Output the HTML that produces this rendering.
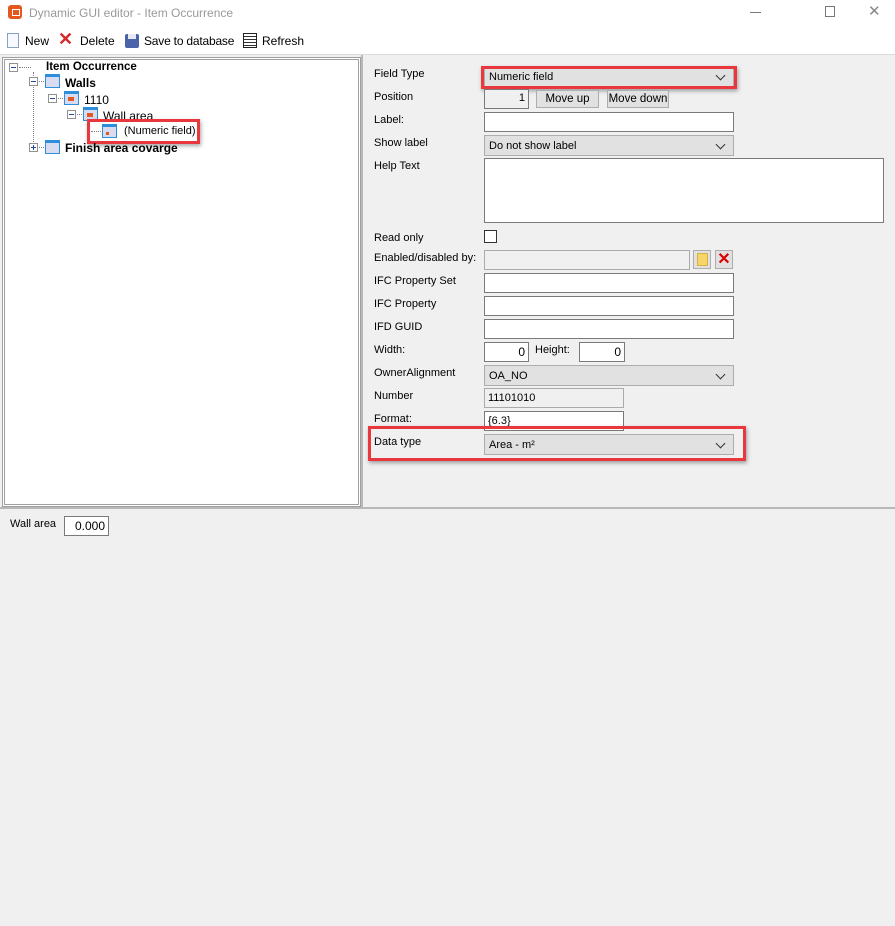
<!DOCTYPE html>
<html><head><meta charset="utf-8"><style>
*{box-sizing:border-box;margin:0;padding:0}
body{width:895px;height:926px;background:#f0f0f0;font-family:"Liberation Sans",Arial,sans-serif;font-size:11px;color:#000;position:relative;overflow:hidden}
.a{position:absolute}
.lbl{position:absolute;left:374px;font-size:11px}
.tb{position:absolute;background:#fff;border:1px solid #7a7a7a;height:20px}
.cb{position:absolute;background:#e1e1e1;border:1px solid #adadad;height:21px;padding:4px 4px 0;font-size:11px}
.cb:after{content:"";position:absolute;right:9px;top:5px;width:6px;height:6px;border-right:1px solid #333;border-bottom:1px solid #333;transform:rotate(45deg)}
.btn{position:absolute;background:#e1e1e1;border:1px solid #adadad;height:18px;font-size:11.5px;text-align:center;line-height:16px;white-space:nowrap}
.red{position:absolute;border:3px solid #e8383d;box-shadow:1px 2px 4px rgba(0,0,0,.35)}
.pm{position:absolute;width:9px;height:9px;border:1px solid #919191;background:#fff}
.pm:before{content:"";position:absolute;left:1px;top:3px;width:5px;height:1px;background:#2b4aa0}
.plus:after{content:"";position:absolute;left:3px;top:1px;width:1px;height:5px;background:#2b4aa0}
.ic{position:absolute;width:15px;height:14px;border:1px solid #2d8fdc;border-top:3px solid #2d8fdc;background:#d9dbf0}
.ic i{position:absolute;left:3px;top:3px;width:6px;height:4px;background:#e05a25}
.dh{position:absolute;border-top:1px dotted #808080;height:0}
.dv{position:absolute;border-left:1px dotted #808080;width:0}
.tt{position:absolute;font-size:12px;white-space:nowrap}
</style></head><body>
<div class="a" style="left:0;top:0;width:895px;height:55px;background:#fff;border-bottom:1px solid #dadada"></div>
<div class="a" style="left:8px;top:5px;width:14px;height:14px;background:#e4571f;border-radius:3px"></div>
<div class="a" style="left:12px;top:9px;width:8px;height:7px;border:1px solid #fff"></div>
<div class="tt" style="left:29px;top:6px;color:#999;font-size:12px">Dynamic GUI editor - Item Occurrence</div>
<div class="a" style="left:750px;top:12px;width:11px;height:1px;background:#777"></div>
<div class="a" style="left:825px;top:6px;width:10px;height:11px;border:1px solid #777"></div>
<div class="tt" style="left:868px;top:2px;color:#888;font-size:15px">✕</div>
<!-- toolbar -->
<div class="a" style="left:7px;top:33px;width:12px;height:15px;border:1px solid #8aa0c0;background:#f6f9ff"></div>
<div class="tt" style="left:25px;top:34px">New</div>
<div class="tt" style="left:58px;top:29px;color:#d42a2a;font-size:18px;font-weight:bold">✕</div>
<div class="tt" style="left:80px;top:34px">Delete</div>
<div class="a" style="left:125px;top:34px;width:14px;height:14px;background:#4b63a8;border-radius:2px"></div>
<div class="a" style="left:128px;top:34px;width:8px;height:5px;background:#e8eaf3"></div>
<div class="tt" style="left:144px;top:34px;letter-spacing:-0.2px">Save to database</div>
<div class="a" style="left:243px;top:33px;width:14px;height:15px;border:1px solid #222;background:#fff;background-image:repeating-linear-gradient(#fff 0 2px,#333 2px 3px)"></div>
<div class="tt" style="left:262px;top:34px">Refresh</div>
<!-- tree panel -->
<div class="a" style="left:2px;top:57px;width:359px;height:450px;background:#fff;border:1px solid #a0a0a0;box-shadow:inset 0 0 0 1px #fff,inset 0 0 0 2px #a0a0a0"></div>
<div class="a" style="left:361px;top:55px;width:2px;height:452px;background:#b8b8b8"></div>
<div class="a" style="left:0;top:507px;width:895px;height:2px;background:#b8b8b8"></div>
<div class="pm" style="left:9px;top:63px"></div><div class="dh" style="left:19px;top:67px;width:12px"></div>
<div class="tt" style="left:46px;top:61px;font-weight:bold;font-size:11.5px">Item Occurrence</div>
<div class="dv" style="left:33px;top:72px;height:76px"></div>
<div class="pm" style="left:29px;top:77px"></div><div class="dh" style="left:39px;top:81px;width:5px"></div>
<div class="ic" style="left:45px;top:74px"></div>
<div class="tt" style="left:65px;top:76px;font-weight:bold">Walls</div>
<div class="pm" style="left:48px;top:94px"></div><div class="dh" style="left:58px;top:98px;width:5px"></div>
<div class="ic" style="left:64px;top:91px"><i></i></div>
<div class="tt" style="left:84px;top:93px">1110</div>
<div class="pm" style="left:67px;top:110px"></div><div class="dh" style="left:77px;top:114px;width:5px"></div>
<div class="ic" style="left:83px;top:107px"><i></i></div>
<div class="tt" style="left:103px;top:109px">Wall area</div>
<div class="red" style="left:87px;top:119px;width:113px;height:25px;background:#fff"></div>
<div class="dh" style="left:91px;top:131px;width:10px"></div>
<div class="ic" style="left:102px;top:124px"><i style="width:3px;height:3px;left:3px;top:5px"></i></div>
<div class="tt" style="left:124px;top:125px;font-size:11px">(Numeric field)</div>
<div class="pm plus" style="left:29px;top:143px"></div><div class="dh" style="left:39px;top:147px;width:5px"></div>
<div class="ic" style="left:45px;top:140px"></div>
<div class="tt" style="left:65px;top:141px;font-weight:bold">Finish area covarge</div>
<!-- form -->
<div class="lbl" style="top:68px">Field Type</div>
<div class="cb" style="left:484px;top:66px;width:250px;background:#e1e1e1">Numeric field</div>
<div class="red" style="left:481px;top:66px;width:256px;height:23px"></div>
<div class="lbl" style="top:91px">Position</div>
<div class="tb" style="left:484px;top:89px;width:45px;text-align:right;padding:2px 3px;background:#f0f0f0">1</div>
<div class="btn" style="left:536px;top:90px;width:63px">Move up</div>
<div class="btn" style="left:607px;top:90px;width:62px">Move down</div>
<div class="lbl" style="top:114px">Label:</div>
<div class="tb" style="left:484px;top:112px;width:250px"></div>
<div class="lbl" style="top:137px">Show label</div>
<div class="cb" style="left:484px;top:135px;width:250px">Do not show label</div>
<div class="lbl" style="top:160px">Help Text</div>
<div class="tb" style="left:484px;top:158px;width:400px;height:65px"></div>
<div class="lbl" style="top:232px">Read only</div>
<div class="a" style="left:484px;top:230px;width:13px;height:13px;border:1px solid #333;background:#fff"></div>
<div class="lbl" style="top:252px">Enabled/disabled by:</div>
<div class="tb" style="left:484px;top:250px;width:206px;background:#f0f0f0;border-color:#aaa"></div>
<div class="a" style="left:693px;top:250px;width:18px;height:19px;background:#e1e1e1;border:1px solid #adadad"></div>
<div class="a" style="left:697px;top:253px;width:11px;height:13px;background:#f7d56b;border:1px solid #d8b040"></div>
<div class="a" style="left:715px;top:250px;width:18px;height:19px;background:#e1e1e1;border:1px solid #adadad;color:#d00;font-weight:bold;font-size:16px;line-height:17px;text-align:center">✕</div>
<div class="lbl" style="top:275px">IFC Property Set</div>
<div class="tb" style="left:484px;top:273px;width:250px"></div>
<div class="lbl" style="top:298px">IFC Property</div>
<div class="tb" style="left:484px;top:296px;width:250px"></div>
<div class="lbl" style="top:321px">IFD GUID</div>
<div class="tb" style="left:484px;top:319px;width:250px"></div>
<div class="lbl" style="top:344px">Width:</div>
<div class="tb" style="left:484px;top:342px;width:45px;text-align:right;padding:2px 3px;font-size:12px">0</div>
<div class="tt" style="left:535px;top:344px;font-size:11px">Height:</div>
<div class="tb" style="left:579px;top:342px;width:46px;text-align:right;padding:2px 3px;font-size:12px">0</div>
<div class="lbl" style="top:367px">OwnerAlignment</div>
<div class="cb" style="left:484px;top:365px;width:250px">OA_NO</div>
<div class="lbl" style="top:390px">Number</div>
<div class="tb" style="left:484px;top:388px;width:140px;background:#f0f0f0;border-color:#aaa;padding:3px 3px">11101010</div>
<div class="lbl" style="top:413px">Format:</div>
<div class="tb" style="left:484px;top:411px;width:140px;padding:3px 3px">{6.3}</div>
<div class="red" style="left:368px;top:426px;width:378px;height:35px"></div>
<div class="lbl" style="top:436px">Data type</div>
<div class="cb" style="left:484px;top:434px;width:250px">Area - m²</div>
<!-- bottom -->
<div class="tt" style="left:10px;top:518px;font-size:11px">Wall area</div>
<div class="tb" style="left:64px;top:516px;width:45px;text-align:right;padding:2px 3px;font-size:12px">0.000</div>
</body></html>
